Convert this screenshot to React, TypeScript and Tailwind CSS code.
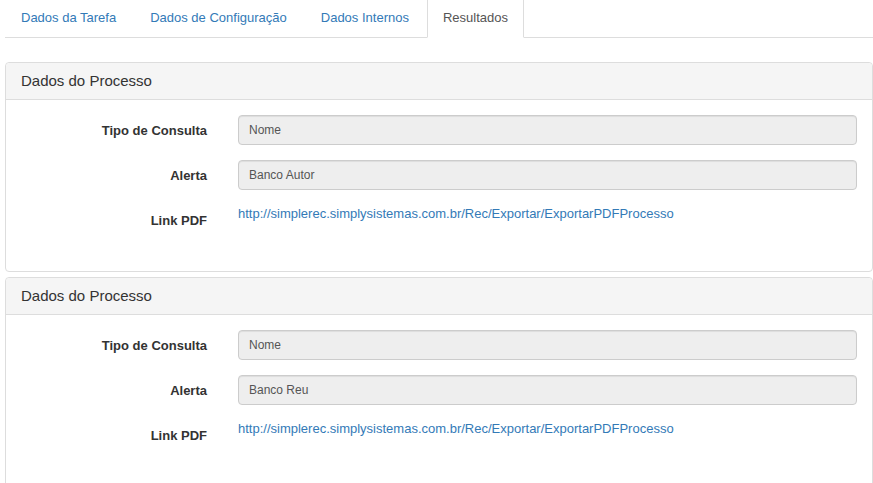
import React from 'react'

const tabs = ['Dados da Tarefa', 'Dados de Configuração', 'Dados Internos', 'Resultados']

const processos = [
  { tipo: 'Nome', alerta: 'Banco Autor' },
  { tipo: 'Nome', alerta: 'Banco Reu' },
]

const link = 'http://simplerec.simplysistemas.com.br/Rec/Exportar/ExportarPDFProcesso'

function Field({ label, children }: { label: string; children: React.ReactNode }) {
  return (
    <div className="grid grid-cols-[186px_1fr] gap-x-[31px]">
      <label className="pt-[7px] text-right text-[13px] font-bold leading-[18.5px] text-[#333]">{label}</label>
      {children}
    </div>
  )
}

function ReadOnlyInput({ value }: { value: string }) {
  return (
    <div className="flex h-[30px] items-center rounded-[4px] border border-[#ccc] bg-[#eee] px-[10px] text-[12px] text-[#555] shadow-[inset_0_1px_1px_rgba(0,0,0,0.075)]">
      {value}
    </div>
  )
}

export default function App() {
  return (
    <div className="min-h-screen bg-white pl-[5px] font-['Liberation_Sans',Arial,sans-serif] text-[13px] text-[#333]">
      {/* Tabs */}
      <ul className="flex h-[38px] border-b border-[#ddd]">
        {tabs.map((t) => {
          const active = t === 'Resultados'
          return (
            <li key={t} className="-mb-px mr-[2px]">
              <a
                className={`flex h-[38px] items-center border-x border-b px-[15px] pb-[1px] leading-[18.5px] ${
                  active ? 'border-x-[#ddd] border-b-white bg-white text-[#555]' : 'border-transparent text-[#337ab7]'
                }`}
              >
                {t}
              </a>
            </li>
          )
        })}
      </ul>

      <div className="mt-[24px] flex flex-col gap-[5px]">
        {processos.map((p, i) => (
          <div key={i} className="rounded-[4px] border border-[#ddd] bg-white">
            <div className="rounded-t-[4px] border-b border-[#ddd] bg-[#f5f5f5] px-[15px] py-[10px] text-[15px] leading-[16px] text-[#333]">
              Dados do Processo
            </div>
            <div className="flex flex-col gap-[15px] px-[15px] pt-[15px] pb-[30px]">
              <Field label="Tipo de Consulta">
                <ReadOnlyInput value={p.tipo} />
              </Field>
              <Field label="Alerta">
                <ReadOnlyInput value={p.alerta} />
              </Field>
              <div className="h-[36px]">
                <Field label="Link PDF">
                  <a className="leading-[18.5px] text-[#337ab7]">{link}</a>
                </Field>
              </div>
            </div>
          </div>
        ))}
      </div>
    </div>
  )
}
